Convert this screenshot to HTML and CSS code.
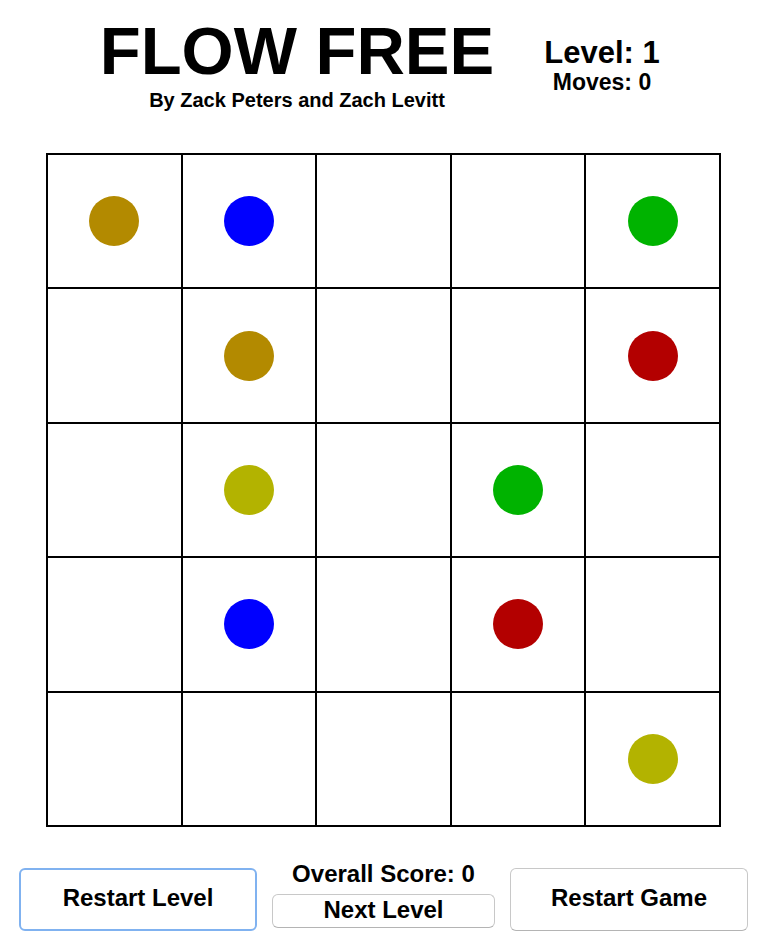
FILE: index.html
```html
<!DOCTYPE html>
<html>
<head>
<meta charset="utf-8">
<title>Flow Free</title>
<link rel="stylesheet" href="styles.css">
</head>
<body>
<header class="header">
  <div class="title-block">
    <h1 class="title">FLOW FREE</h1>
    <div class="subtitle">By Zack Peters and Zach Levitt</div>
  </div>
  <div class="stats">
    <div class="level">Level: 1</div>
    <div class="moves">Moves: 0</div>
  </div>
</header>

<div class="board">
  <div class="cell"><span class="dot gold"></span></div>
  <div class="cell"><span class="dot blue"></span></div>
  <div class="cell"></div>
  <div class="cell"></div>
  <div class="cell"><span class="dot green"></span></div>

  <div class="cell"></div>
  <div class="cell"><span class="dot gold"></span></div>
  <div class="cell"></div>
  <div class="cell"></div>
  <div class="cell"><span class="dot red"></span></div>

  <div class="cell"></div>
  <div class="cell"><span class="dot yellow"></span></div>
  <div class="cell"></div>
  <div class="cell"><span class="dot green"></span></div>
  <div class="cell"></div>

  <div class="cell"></div>
  <div class="cell"><span class="dot blue"></span></div>
  <div class="cell"></div>
  <div class="cell"><span class="dot red"></span></div>
  <div class="cell"></div>

  <div class="cell"></div>
  <div class="cell"></div>
  <div class="cell"></div>
  <div class="cell"></div>
  <div class="cell"><span class="dot yellow"></span></div>
</div>

<div class="controls">
  <button class="btn btn-big btn-focus">Restart Level</button>
  <div class="middle">
    <div class="score">Overall Score: 0</div>
    <button class="btn btn-small">Next Level</button>
  </div>
  <button class="btn btn-big">Restart Game</button>
</div>
</body>
</html>
```

FILE: styles.css
```css
html, body {
  margin: 0;
  padding: 0;
  background: #ffffff;
}

body {
  width: 770px;
  font-family: "Liberation Sans", Arial, Helvetica, sans-serif;
  font-weight: bold;
  color: #000000;
}

.header {
  display: flex;
  align-items: flex-start;
  padding-top: 17px;
}

.title-block {
  margin-left: 67px;
  width: 460px;
  text-align: center;
}

.title {
  margin: 0;
  font-size: 67px;
  line-height: 67px;
  font-weight: bold;
}

.subtitle {
  margin-top: 6px;
  font-size: 20px;
  line-height: 20px;
}

.stats {
  width: 150px;
  margin-top: 20px;
  text-align: center;
}

.level {
  font-size: 31px;
  line-height: 31px;
}

.moves {
  margin-top: 3px;
  font-size: 23px;
  line-height: 23px;
}

.board {
  margin: 43px 0 0 46px;
  width: 675px;
  height: 674px;
  box-sizing: border-box;
  background: #000000;
  padding: 2px;
  display: grid;
  grid-template-columns: repeat(5, 1fr);
  grid-template-rows: repeat(5, 1fr);
  gap: 2px;
}

.cell {
  background: #ffffff;
  display: flex;
  align-items: center;
  justify-content: center;
}

.dot {
  width: 50px;
  height: 50px;
  border-radius: 50%;
}

.gold { background: #b38a00; }
.blue { background: #0000ff; }
.green { background: #00b300; }
.red { background: #b30000; }
.yellow { background: #b3b300; }

.controls {
  display: flex;
  align-items: flex-start;
  margin-top: 35px;
  padding-left: 19px;
}

.btn {
  font-family: "Liberation Sans", Arial, Helvetica, sans-serif;
  font-weight: bold;
  font-size: 24px;
  color: #000000;
  background: #ffffff;
  border: 1px solid #c8c8c8;
  border-bottom-color: #b4b4b4;
  border-radius: 6px;
  padding: 0 0 3px 0;
  box-sizing: border-box;
}

.btn-big {
  margin-top: 6px;
  width: 238px;
  height: 63px;
}

.btn-focus {
  border: 2px solid #80b2f0;
}

.middle {
  margin-left: 15px;
  width: 223px;
  display: flex;
  flex-direction: column;
  align-items: center;
}

.score {
  font-size: 24px;
  line-height: 24px;
}

.btn-small {
  margin-top: 8px;
  width: 223px;
  height: 34px;
  line-height: 28px;
}

.middle + .btn-big {
  margin-left: 15px;
}
```
